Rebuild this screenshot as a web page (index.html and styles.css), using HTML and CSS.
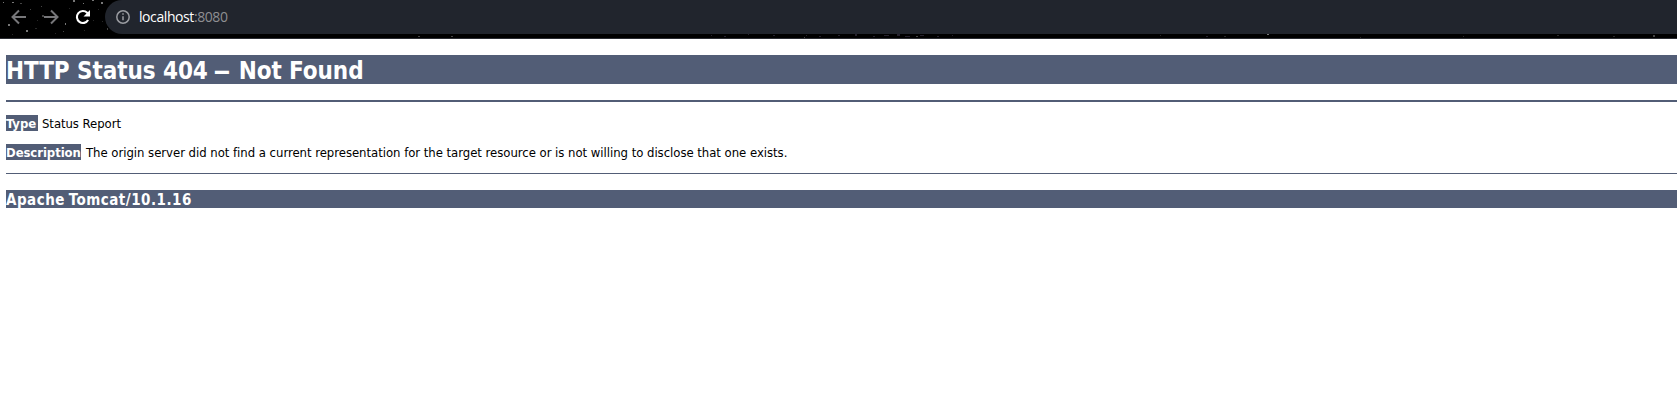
FILE: index.html
```html
<!DOCTYPE html>
<html lang="en">
<head>
<meta charset="utf-8">
<title>HTTP Status 404 – Not Found</title>
<link rel="stylesheet" href="styles.css">
</head>
<body>
<header class="toolbar">
  <svg class="stars" width="1677" height="38" viewBox="0 0 1677 38" shape-rendering="crispEdges" aria-hidden="true">
    <g fill="#777"><path d="M3 2h1v1h-1zM12 2h2v1h-2zM73 0h2v2h-2zM83 3h1v1h-1zM101 2h2v2h-2zM92 0h2v1h-2zM8 24h2v2h-2zM26 30h2v2h-2zM65 23h1v2h-1zM1267 34h2v1h-2z"/></g>
    <g fill="#444"><path d="M41 6h1v1h-1zM110 8h1v1h-1zM107 28h1v2h-1zM916 36h2v1h-2zM1653 35h2v2h-2zM804 37h1v1h-1zM20 3h2v1h-2zM30 9h1v1h-1zM42 15h2v2h-2zM63 31h1v1h-1zM418 36h2v1h-2zM451 36h2v1h-2z"/></g>
    <g fill="#282828"><path d="M37 20h1v1h-1zM53 12h1v1h-1zM69 8h1v1h-1zM84 30h1v1h-1zM93 20h1v1h-1zM98 9h1v1h-1zM102 21h1v1h-1zM12 34h1v1h-1zM35 28h2v1h-2zM55 33h1v1h-1zM1160 35h1v1h-1zM1224 36h2v1h-2zM1360 37h1v1h-1zM1463 36h1v1h-1zM1557 35h2v1h-2zM1613 36h2v1h-2z"/></g>
    <g fill="#25212d"><path d="M711 35h1v1h-1zM724 36h2v1h-2zM748 34h1v1h-1zM773 35h2v1h-2zM806 35h1v1h-1zM819 36h2v1h-2zM838 35h2v1h-2zM855 34h2v2h-2zM873 36h2v1h-2zM884 35h5v1h-5zM897 34h3v2h-3zM905 36h5v1h-5zM920 35h4v1h-4zM937 36h2v1h-2zM952 35h1v1h-1zM1206 36h2v1h-2z"/></g>
  </svg>
  <nav class="navigation">
    <svg class="icon" viewBox="0 0 16 16"><path class="arrow" d="M15 8H2M8 1.5 1.5 8 8 14.5"/></svg>
    <svg class="icon" viewBox="0 0 16 16"><path class="arrow" d="M1 8h13M8 1.5 14.5 8 8 14.5"/></svg>
    <svg class="icon" viewBox="0 0 16 16"><path class="reload" d="M13.1 11A6 6 0 1 1 12.2 3.8L14 5.6"/><path class="reload-tip" d="M15 1v6.5H8.5z"/></svg>
  </nav>
  <div class="address">
    <svg class="info" viewBox="0 0 14 14"><circle cx="7" cy="7" r="6.2"/><path d="M7 6.2v4M7 3.3v1.5"/></svg>
    <span class="url"><span class="host">localhost</span><span class="port">:8080</span></span>
  </div>
</header>
<main class="page">
  <h1 class="title">HTTP Status 404 <span class="dash">–</span> Not Found</h1>
  <hr class="line line-thick">
  <p class="row"><b class="label label-type">Type</b><span class="report">Status Report</span></p>
  <p class="row"><b class="label label-description">Description</b><span class="description">The origin server did not find a current representation for the target resource or is not willing to disclose that one exists.</span></p>
  <hr class="line">
  <h3 class="server">Apache Tomcat/10.1.16</h3>
</main>
</body>
</html>
```
FILE: styles.css
```css
body {
  margin: 0;
  background: #fff;
  color: #000;
  font-family: "DejaVu Sans Condensed", "DejaVu Sans", sans-serif;
  font-stretch: condensed;
  overflow: hidden;
}
.toolbar {
  position: relative;
  display: flex;
  height: 38px;
  background: #000;
  border-bottom: 1px solid #2b2d33;
}
.stars {
  position: absolute;
  inset: 0;
}
.navigation {
  position: relative;
  display: flex;
  gap: 16px;
  width: 94px;
  padding: 9px 0 0 11px;
}
.icon {
  width: 16px;
  height: 16px;
}
.arrow {
  fill: none;
  stroke: #77777a;
  stroke-width: 2;
}
.reload {
  fill: none;
  stroke: #fff;
  stroke-width: 2.1;
}
.reload-tip {
  fill: #fff;
}
.address {
  position: relative;
  display: flex;
  flex: 1;
  align-items: center;
  box-sizing: border-box;
  height: 34px;
  padding-left: 11px;
  background: #21252d;
  border-radius: 17px 0 0 17px;
}
.info {
  width: 14px;
  height: 14px;
  fill: none;
  stroke: #9a9ca1;
  stroke-width: 1.5;
}
.url {
  margin-left: 9px;
  font: 14px/18px "Open Sans", sans-serif;
  letter-spacing: -0.42px;
}
.host {
  color: #fff;
}
.port {
  color: #8e8f92;
}
.page {
  padding: 16px 0 0 6px;
}
.title,
.server {
  margin: 0;
  background: #525d76;
  color: #fff;
  white-space: nowrap;
}
.title {
  box-sizing: border-box;
  height: 29px;
  padding-top: 3px;
  font-size: 24px;
  line-height: 26px;
  letter-spacing: -0.08px;
}
.dash {
  display: inline-block;
  width: 17px;
  transform: scaleX(1.65);
  transform-origin: 0 50%;
  margin-left: -2px;
  margin-right: 1px;
}
.line {
  height: 1px;
  margin: 13px 0 16px;
  border: 0;
  background: #525d76;
}
.line-thick {
  height: 2px;
  margin: 16px 0 13px;
}
.row {
  display: flex;
  gap: 4px;
  height: 16px;
  margin: 0 0 13px;
  font-size: 13px;
  line-height: 18px;
  white-space: nowrap;
}
.label {
  height: 16px;
  background: #525d76;
  color: #fff;
  letter-spacing: -0.08px;
}
.label-type {
  width: 32px;
}
.label-description {
  width: 75px;
}
.report {
  letter-spacing: -0.06px;
}
.description {
  margin-left: 1px;
  letter-spacing: -0.033px;
}
.server {
  height: 18px;
  font-size: 15px;
  line-height: 20px;
  letter-spacing: 0.5px;
  word-spacing: -1.5px;
}
```
